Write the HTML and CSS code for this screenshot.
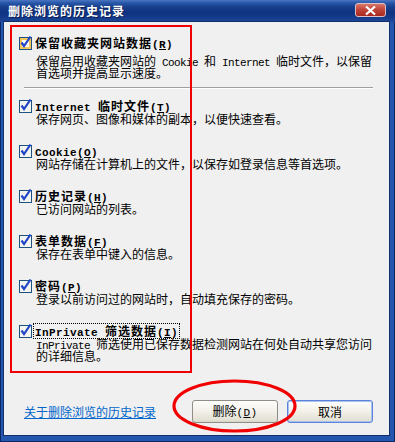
FILE: index.html
```html
<!DOCTYPE html>
<html lang="zh-CN">
<head>
<meta charset="utf-8">
<title>删除浏览的历史记录</title>
<link rel="stylesheet" href="styles.css">
</head>
<body>
<div class="window">
  <div class="titlebar">
    <span class="title">删除浏览的历史记录</span>
    <span class="close"><svg width="13" height="11" viewBox="0 0 13 11"><path d="M2 1.5 L11 9.5 M11 1.5 L2 9.5" stroke="#fff" stroke-width="2.2" fill="none"/></svg></span>
  </div>
  <div class="frame">
    <div class="client">
      <div class="item first">
        <div class="head">
          <svg class="cb" viewBox="0 0 13 13"><rect x="0.5" y="0.5" width="12" height="12" fill="#f6c55a" stroke="#1c5180"/><rect x="3" y="3" width="7" height="7" fill="#fbfbf8"/><polyline points="2.5,5.5 5,9 11.5,-0.5" fill="none" stroke="#2146c8" stroke-width="2.2"/></svg>
          <span class="ht">保留收藏夹网站数据<span class="l">(<u>R</u>)</span></span>
        </div>
        <div class="desc"><div class="ln">保留启用收藏夹网站的<span class="l"> Cookie </span>和<span class="l"> Internet </span>临时文件，以保留</div><div class="ln">首选项并提高显示速度。</div></div>
      </div>
      <div class="sep"></div>
      <div class="item">
        <div class="head">
          <svg class="cb" viewBox="0 0 13 13"><rect x="0.5" y="0.5" width="12" height="12" fill="#f4f4f0" stroke="#1c5180"/><polyline points="2.5,5.5 5,9 11.5,-0.5" fill="none" stroke="#2146c8" stroke-width="2.2"/></svg>
          <span class="ht"><span class="l">Internet </span>临时文件<span class="l">(<u>T</u>)</span></span>
        </div>
        <div class="desc"><div class="ln">保存网页、图像和媒体的副本，以便快速查看。</div></div>
      </div>
      <div class="item">
        <div class="head">
          <svg class="cb" viewBox="0 0 13 13"><rect x="0.5" y="0.5" width="12" height="12" fill="#f4f4f0" stroke="#1c5180"/><polyline points="2.5,5.5 5,9 11.5,-0.5" fill="none" stroke="#2146c8" stroke-width="2.2"/></svg>
          <span class="ht"><span class="l">Cookie(<u>O</u>)</span></span>
        </div>
        <div class="desc"><div class="ln">网站存储在计算机上的文件，以保存如登录信息等首选项。</div></div>
      </div>
      <div class="item">
        <div class="head">
          <svg class="cb" viewBox="0 0 13 13"><rect x="0.5" y="0.5" width="12" height="12" fill="#f4f4f0" stroke="#1c5180"/><polyline points="2.5,5.5 5,9 11.5,-0.5" fill="none" stroke="#2146c8" stroke-width="2.2"/></svg>
          <span class="ht">历史记录<span class="l">(<u>H</u>)</span></span>
        </div>
        <div class="desc"><div class="ln">已访问网站的列表。</div></div>
      </div>
      <div class="item">
        <div class="head">
          <svg class="cb" viewBox="0 0 13 13"><rect x="0.5" y="0.5" width="12" height="12" fill="#f4f4f0" stroke="#1c5180"/><polyline points="2.5,5.5 5,9 11.5,-0.5" fill="none" stroke="#2146c8" stroke-width="2.2"/></svg>
          <span class="ht">表单数据<span class="l">(<u>F</u>)</span></span>
        </div>
        <div class="desc"><div class="ln">保存在表单中键入的信息。</div></div>
      </div>
      <div class="item">
        <div class="head">
          <svg class="cb" viewBox="0 0 13 13"><rect x="0.5" y="0.5" width="12" height="12" fill="#f4f4f0" stroke="#1c5180"/><polyline points="2.5,5.5 5,9 11.5,-0.5" fill="none" stroke="#2146c8" stroke-width="2.2"/></svg>
          <span class="ht">密码<span class="l">(<u>P</u>)</span></span>
        </div>
        <div class="desc"><div class="ln">登录以前访问过的网站时，自动填充保存的密码。</div></div>
      </div>
      <div class="item">
        <div class="head">
          <svg class="cb" viewBox="0 0 13 13"><rect x="0.5" y="0.5" width="12" height="12" fill="#f4f4f0" stroke="#1c5180"/><polyline points="2.5,5.5 5,9 11.5,-0.5" fill="none" stroke="#2146c8" stroke-width="2.2"/></svg>
          <span class="ht focus"><span class="l">InPrivate </span>筛选数据<span class="l">(<u>I</u>)</span></span>
        </div>
        <div class="desc"><div class="ln"><span class="l">InPrivate </span>筛选使用已保存数据检测网站在何处自动共享您访问</div><div class="ln">的详细信息。</div></div>
      </div>
      <div class="footer">
        <a class="link" href="#">关于删除浏览的历史记录</a>
        <div class="buttons">
          <button class="btn" type="button">删除<span class="l">(<u>D</u>)</span></button>
          <button class="btn default" type="button">取消</button>
        </div>
      </div>
    </div>
  </div>
  <div class="redbox"></div>
  <svg class="ring" width="395" height="442" viewBox="0 0 395 442"><ellipse cx="234.5" cy="406" rx="60.5" ry="25" fill="none" stroke="#f00000" stroke-width="3.2"/></svg>
</div>
</body>
</html>
```

FILE: styles.css
```css
* { box-sizing: border-box; }
html, body {
  margin: 0;
  padding: 0;
  width: 395px;
  height: 442px;
  overflow: hidden;
  background: #ffffff;
}
.window {
  position: relative;
  width: 395px;
  height: 442px;
  display: flex;
  flex-direction: column;
  font-family: "Noto Sans CJK SC", "Noto Sans", sans-serif;
  font-size: 12px;
  color: #000;
}
.titlebar {
  height: 22px;
  flex: none;
  display: flex;
  align-items: flex-start;
  padding: 0 9px 0 8px;
  background: linear-gradient(180deg, #4a75c2 0px, #2856a8 3px, #173f8c 7px, #0f3381 12px, #14398a 17px, #1e4898 22px);
}
.title {
  flex: 1;
  margin-top: 4px;
  color: #fff;
  font-weight: bold;
  letter-spacing: 1px;
  line-height: 14px;
  text-shadow: 1px 1px 0 #0a1d50;
}
.close {
  width: 31px;
  height: 14px;
  margin-top: 3px;
  display: flex;
  align-items: center;
  justify-content: center;
  border: 1px solid #d9c3c6;
  border-radius: 3px;
  background: linear-gradient(180deg, #d9766a 0%, #c2453b 45%, #a8281f 100%);
}
.close svg { display: block; }
.frame {
  flex: 1;
  display: flex;
  padding: 0 5px 6px 3px;
  background: #2456ae;
  border-left: 1px solid #0b2766;
  border-right: 1px solid #0b2766;
  border-bottom: 1px solid #0b2766;
}
.client {
  flex: 1;
  display: flex;
  flex-direction: column;
  background: #f0f0f0;
  padding: 14px 0 0 15px;
  box-shadow: 0 0 0 1px #102f6c;
}
.item {
  display: flex;
  flex-direction: column;
}
.item + .item { margin-top: 19px; }
.head {
  display: flex;
  align-items: center;
  height: 14px;
  font-weight: bold;
  letter-spacing: 1px;
  white-space: nowrap;
}
.ht {
  display: block;
  height: 14px;
  line-height: 14px;
}
.cb {
  width: 13px;
  height: 13px;
  flex: none;
  margin-right: 3px;
  overflow: visible;
}
.desc {
  padding-left: 17px;
  white-space: nowrap;
}
.ln {
  height: 12px;
  line-height: 12px;
}
.first .desc { margin-top: 5px; }
.l {
  font-family: "Liberation Mono", "DejaVu Sans Mono", monospace;
  font-size: 11px;
  letter-spacing: -0.6px;
}
.head .l { letter-spacing: 0.4px; }
.sep {
  height: 2px;
  border-top: 1px solid #a0a0a0;
  border-bottom: 1px solid #ffffff;
  margin: 8px 16px 10px 5px;
}
.focus {
  outline: 1px dotted #000;
  outline-offset: 0;
  padding: 0 1px;
  margin-left: -1px;
}
.footer {
  margin-top: 38px;
  height: 23px;
  display: flex;
  align-items: center;
  padding: 0 16px 0 5px;
}
.link {
  flex: 1;
  color: #0066cc;
  text-decoration: underline;
  line-height: 14px;
}
.buttons {
  display: flex;
  gap: 9px;
}
.btn {
  width: 86px;
  height: 23px;
  padding: 0;
  font: inherit;
  color: #000;
  line-height: 14px;
  border: 1px solid #8f8d86;
  border-radius: 3px;
  background: linear-gradient(180deg, #fdfdfb 0%, #f2f0e8 50%, #e4e1d6 90%, #d8d4c6 100%);
}
.btn .l { letter-spacing: 0.4px; }
.btn.default {
  border-color: #5b82d8;
  box-shadow: inset 0 0 0 1px #a9c3f0;
}
.redbox {
  position: absolute;
  left: 10px;
  top: 25px;
  width: 182px;
  height: 348px;
  border: 2px solid #f00000;
  pointer-events: none;
}
.ring {
  position: absolute;
  left: 0;
  top: 0;
  pointer-events: none;
}
```
